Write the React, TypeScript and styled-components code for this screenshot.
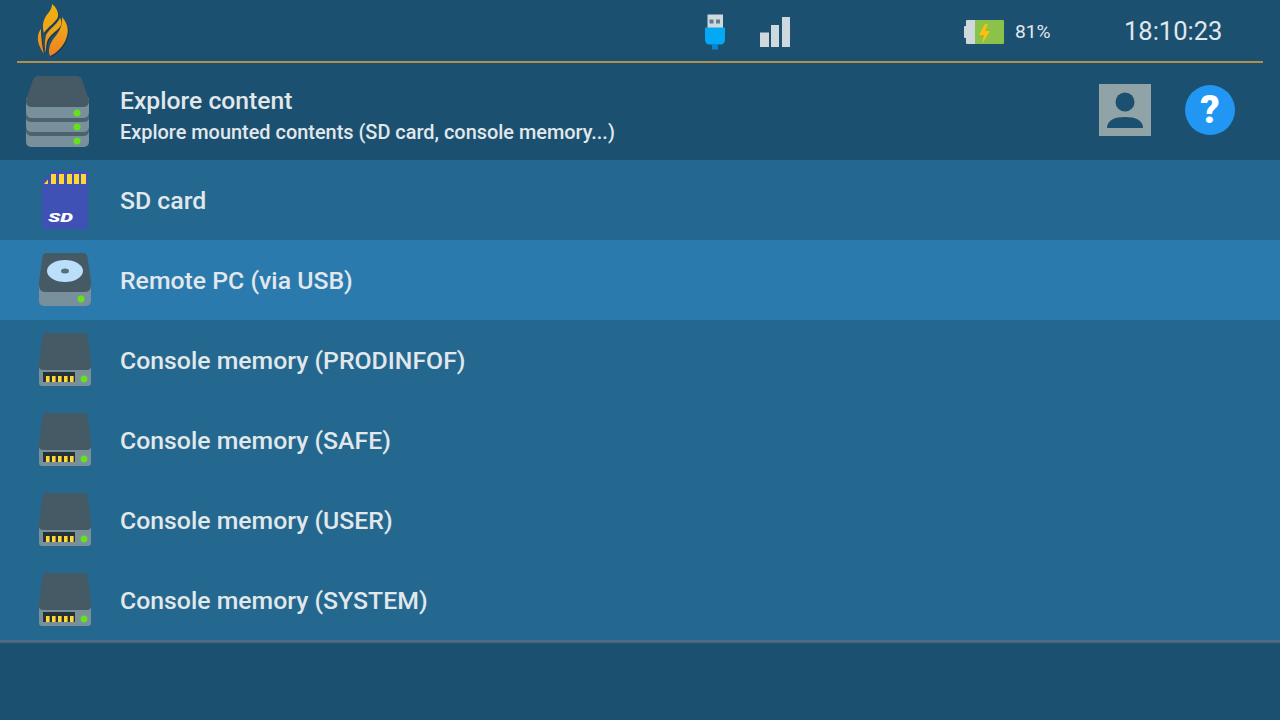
import React from "react";
import styled, { createGlobalStyle } from "styled-components";

const Global = createGlobalStyle`
  html, body { margin: 0; padding: 0; width: 1280px; height: 720px; overflow: hidden; background: #1c5070; }
  * { box-sizing: border-box; }
`;

const Page = styled.div`
  width: 1280px;
  height: 720px;
  display: flex;
  flex-direction: column;
  background: #1c5070;
  color: #e1e8ec;
  font-family: Roboto, "Liberation Sans", sans-serif;
`;

const TopBar = styled.header`
  height: 63px;
  margin: 0 17px;
  border-bottom: 2px solid #b0904a;
  display: flex;
  align-items: center;
`;

const Logo = styled.svg`
  width: 30px;
  height: 52px;
  margin-left: 21px;
  margin-top: -1px;
  flex: none;
  overflow: visible;
  filter: drop-shadow(1px 1px 0 #17384d);
`;

const UsbIcon = styled.svg`
  width: 20px;
  height: 36px;
  margin-left: 637px;
  margin-top: 2px;
  flex: none;
`;

const SignalIcon = styled.svg`
  width: 30px;
  height: 30px;
  margin-left: 35px;
  margin-top: 3px;
  flex: none;
`;

const BatteryIcon = styled.svg`
  width: 40px;
  height: 24px;
  margin-left: 174px;
  margin-top: 3px;
  flex: none;
`;

const Percent = styled.span`
  font-size: 19.2px;
  margin-left: 11px;
  margin-top: 2px;
  width: 110px;
`;

const Clock = styled.span`
  font-size: 25.5px;
  margin-left: -1px;
`;

const TitleBar = styled.section`
  height: 97px;
  display: flex;
  align-items: center;
  padding-right: 45px;
`;

const TitleIcon = styled.svg`
  width: 66px;
  height: 72px;
  margin-left: 25px;
  margin-right: 29px;
  flex: none;
`;

const TitleText = styled.div`
  flex: 1;
  display: flex;
  flex-direction: column;
  gap: 5px;
  margin-top: 8px;
`;

const Title = styled.div`
  font-size: 24.7px;
  line-height: 30px;
  font-weight: 500;
`;

const Subtitle = styled.div`
  font-size: 19.92px;
  line-height: 24px;
  font-weight: 500;
`;

const Avatar = styled.svg`
  width: 52px;
  height: 52px;
  margin-right: 34px;
  margin-top: -3px;
  flex: none;
`;

const Help = styled.div`
  width: 50px;
  height: 50px;
  margin-top: -3px;
  border-radius: 50%;
  background: #2196f3;
  color: #fff;
  font-size: 38px;
  font-weight: 900;
  display: flex;
  align-items: center;
  justify-content: center;
  flex: none;
`;

const List = styled.main`
  background: #24678f;
`;

const Row = styled.div<{ $active?: boolean }>`
  height: 80px;
  display: flex;
  align-items: center;
  background: ${(p) => (p.$active ? "#2b7aae" : "#24678f")};
`;

const RowIcon = styled.div`
  width: 120px;
  padding-left: 38px;
  flex: none;
`;

const RowLabel = styled.span`
  font-size: 24.8px;
  font-weight: 500;
`;

const Footer = styled.footer`
  flex: 1;
  background: linear-gradient(#4f6d82 0, #4f6d82 2px, #2f5773 3px, #1c5070 4px);
`;

const Glyph = styled.svg`
  width: 54px;
  height: 58px;
  display: block;
`;

const SdLogo = styled.text`
  font-family: Roboto, sans-serif;
  font-size: 12px;
  font-weight: 900;
  font-style: italic;
  fill: #fff;
`;

const Memory = () => (
  <Glyph viewBox="0 0 54 58">
    <path d="M1 36h52v16a3 3 0 0 1-3 3H4a3 3 0 0 1-3-3z" fill="#78909c" />
    <path d="M8 2h38q3 0 3.500 3L53 33v2q0 4-4 4H5q-4 0-4-4v-2L4.500 5Q5 2 8 2z" fill="#455a64" />
    <rect x="5" y="41" width="32" height="10" fill="#263238" />
    {[8, 14, 20, 26, 32].map((x) => (
      <rect key={x} x={x} y="45" width="3.600" height="6" fill="#fdd835" />
    ))}
    <circle cx="46" cy="48" r="3.400" fill="#66e01c" />
  </Glyph>
);

const rows = ["PRODINFOF", "SAFE", "USER", "SYSTEM"];

export default function App() {
  return (
    <Page>
      <Global />
      <TopBar>
        <Logo viewBox="0 0 30 52">
          <defs>
            <linearGradient id="fl2" gradientUnits="userSpaceOnUse" x1="0" y1="0" x2="0" y2="52">
              <stop offset="0" stopColor="#efb00c" />
              <stop offset="0.5" stopColor="#efa31a" />
              <stop offset="1" stopColor="#f07d22" />
            </linearGradient>
          </defs>
          <path d="M14 0C18 3 21 8 20 13 18 18 10 23 6 29 4 22 5 17 8 12 11 8 14 5 14 0z" fill="url(#fl2)" />
          <path d="M3 25C-1 30-1 37 2 43 3 46 5 48 6 50 4 42 3 33 3 25z" fill="url(#fl2)" />
          <path d="M8 31C11 25 18 22 22 14 24 17 24 20 22 23 18 28 11 31 9 38 8 42 8 46 8 49 6 43 7 36 8 31z" fill="url(#fl2)" />
          <path d="M24 13C29 18 31 25 29 32 27 41 19 49 12 52 10 48 11 42 14 37 18 31 25 25 24 13z" fill="url(#fl2)" />
        </Logo>
        <UsbIcon viewBox="0 0 20 36">
          <rect x="2.500" y="0.500" width="15.500" height="14" fill="#cfd8dc" />
          <rect x="4.500" y="5.500" width="4" height="4" fill="#607d8b" />
          <rect x="11" y="5.500" width="4" height="4" fill="#607d8b" />
          <path d="M0 13.500h20v12c0 3-2 5-4 5H4c-2 0-4-2-4-5z" fill="#03a9f4" />
          <rect x="7" y="30" width="6" height="5.500" fill="#0288d1" />
        </UsbIcon>
        <SignalIcon viewBox="0 0 30 30">
          <rect x="0" y="15.500" width="9" height="14.500" fill="#cfd8dc" />
          <rect x="11" y="8" width="8" height="22" fill="#cfd8dc" />
          <rect x="22" y="0" width="8" height="30" fill="#cfd8dc" />
        </SignalIcon>
        <BatteryIcon viewBox="0 0 40 24">
          <rect x="0" y="6" width="3" height="12" rx="1" fill="#cfd8dc" />
          <rect x="2" y="0" width="10" height="24" rx="1" fill="#cfd8dc" />
          <rect x="11" y="0" width="29" height="24" rx="1" fill="#8bc34a" />
          <path d="M21 4l-6 11h5l-2 9 8-13h-5l3-7z" fill="#ffc107" />
        </BatteryIcon>
        <Percent>81%</Percent>
        <Clock>18:10:23</Clock>
      </TopBar>
      <TitleBar>
        <TitleIcon viewBox="0 0 66 72">
          <rect x="1" y="44" width="63" height="27" rx="5" fill="#78909c" />
          <path d="M1 40h63v6q0 6-6 6H7q-6 0-6-6z" fill="#4c626c" transform="translate(0 8)" />
          <path d="M1 30h63v20q0 6-6 6H7q-6 0-6-6z" fill="#78909c" />
          <path d="M1 30h63v12q0 4-6 4H7q-6 0-6-4z" fill="#4c626c" />
          <path d="M1 22h63v14q0 6-6 6H7q-6 0-6-6z" fill="#78909c" />
          <path d="M13 0h38q5 0 6.500 5L64 24v1q0 6-6 6H7q-6 0-6-6v-1L7.500 5Q9 0 13 0z" fill="#455a64" />
          <circle cx="52" cy="37" r="3.500" fill="#66e01c" />
          <circle cx="52" cy="51" r="3.500" fill="#66e01c" />
          <circle cx="52" cy="65" r="3.500" fill="#66e01c" />
        </TitleIcon>
        <TitleText>
          <Title>Explore content</Title>
          <Subtitle>Explore mounted contents (SD card, console memory...)</Subtitle>
        </TitleText>
        <Avatar viewBox="0 0 52 52">
          <rect width="52" height="52" fill="#90a4a8" />
          <circle cx="26" cy="18" r="9.500" fill="#1c5070" />
          <path d="M8 44c0-8 8-11 18-11s18 3 18 11z" fill="#1c5070" />
        </Avatar>
        <Help>?</Help>
      </TitleBar>
      <List>
        <Row>
          <RowIcon>
            <Glyph viewBox="0 1 54 58">
              <path d="M14 1h36v58H4V12z" fill="#3f51b5" />
              <path d="M6 14l4-4.500V14z" fill="#fdd835" />
              {[13, 21, 29, 36, 43].map((x) => (
                <rect key={x} x={x} y="4" width="5" height="10" fill="#fdd835" />
              ))}
              <SdLogo x="10" y="52" textLength="25" lengthAdjust="spacingAndGlyphs">SD</SdLogo>
            </Glyph>
          </RowIcon>
          <RowLabel>SD card</RowLabel>
        </Row>
        <Row $active>
          <RowIcon>
            <Glyph viewBox="0 0 54 58">
              <path d="M1 32h52v18a5 5 0 0 1-5 5H6a5 5 0 0 1-5-5z" fill="#78909c" />
              <path d="M9 2h36q4 0 4.500 4L53 31v3q0 7-6 7H7q-6 0-6-7v-3L4.500 6Q5 2 9 2z" fill="#455a64" />
              <ellipse cx="27" cy="20" rx="18" ry="11" fill="#bbdefb" />
              <ellipse cx="27" cy="20" rx="4" ry="2.500" fill="#546e7a" />
              <circle cx="43" cy="48" r="3.400" fill="#66e01c" />
            </Glyph>
          </RowIcon>
          <RowLabel>Remote PC (via USB)</RowLabel>
        </Row>
        {rows.map((r) => (
          <Row key={r}>
            <RowIcon><Memory /></RowIcon>
            <RowLabel>Console memory ({r})</RowLabel>
          </Row>
        ))}
      </List>
      <Footer />
    </Page>
  );
}
